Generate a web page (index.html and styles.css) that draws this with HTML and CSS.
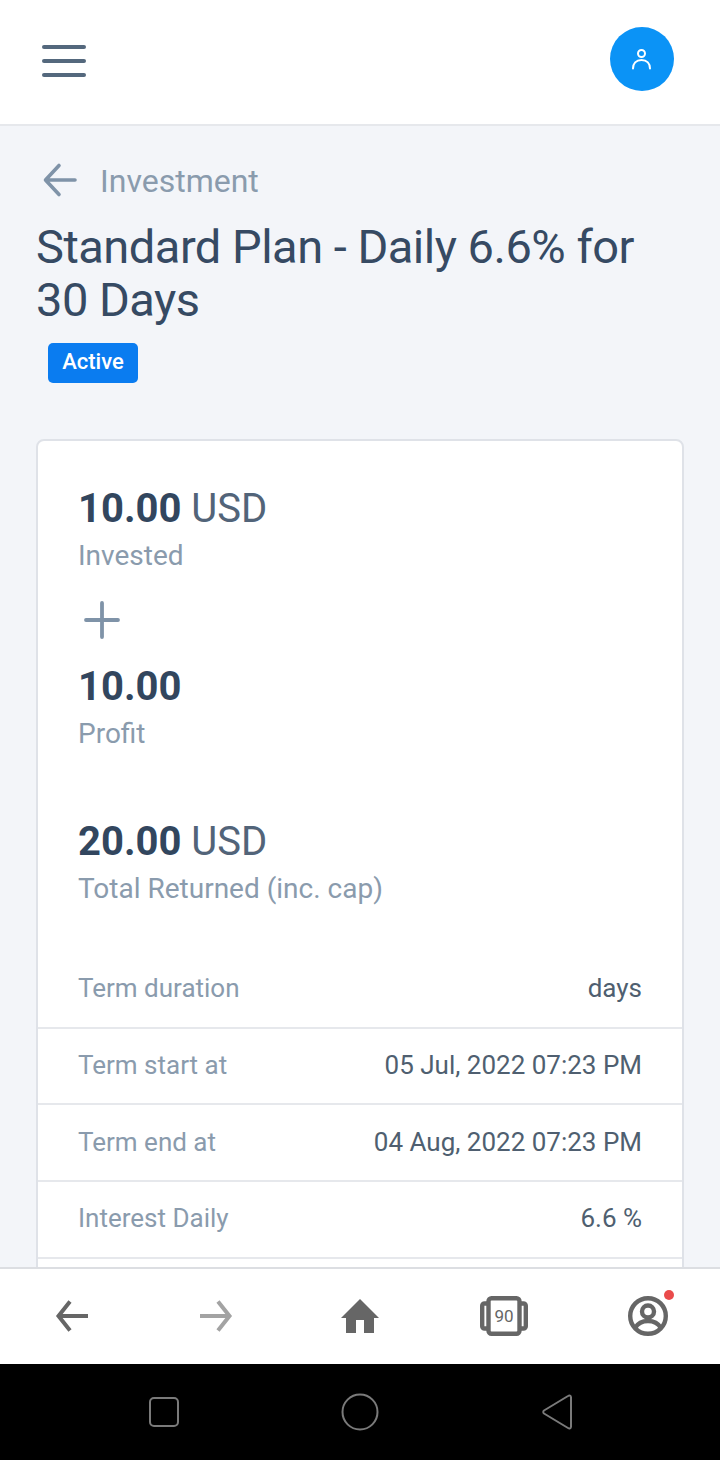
FILE: index.html
```html
<!DOCTYPE html>
<html lang="en">
<head>
  <meta charset="UTF-8" />
  <meta name="viewport" content="width=device-width, initial-scale=1.0"/>
  <title>Investment</title>
  <link rel="stylesheet" href="styles.css">
</head>
<body>
<header class="topbar">
  <div class="burger"><span></span><span></span><span></span></div>
  <div class="avatar">
    <svg width="24" height="24" viewBox="0 0 24 24" fill="none" stroke="#fff" stroke-width="2" stroke-linecap="round">
      <circle cx="11.500" cy="6.500" r="3.500"/>
      <path d="M3 21.500c0-5 3-8.500 8.500-8.500s8.500 3.500 8.500 8.500"/>
    </svg>
  </div>
</header>

<main class="content">
  <div class="crumb">
    <svg width="36" height="36" viewBox="0 0 36 36" fill="none" stroke="#7f93a8" stroke-width="3.600" stroke-linecap="round" stroke-linejoin="round">
      <path d="M33 18H4M17 3.500 3.500 18 17 32.500"/>
    </svg>
    <span>Investment</span>
  </div>
  <h1>Standard Plan - Daily 6.6% for 30 Days</h1>
  <span class="badge">Active</span>

  <section class="card">
    <div class="summary">
      <div class="amount"><b>10.00</b> USD</div>
      <div class="label">Invested</div>
      <svg class="plus" width="38" height="38" viewBox="0 0 38 38" stroke="#7f93a8" stroke-width="3.800" stroke-linecap="round">
        <path d="M19 2v34M3 19h32"/>
      </svg>
      <div class="amount"><b>10.00</b></div>
      <div class="label">Profit</div>
      <div class="amount total"><b>20.00</b> USD</div>
      <div class="label">Total Returned (inc. cap)</div>
    </div>
    <ul class="rows">
      <li><span>Term duration</span><strong>days</strong></li>
      <li><span>Term start at</span><strong>05 Jul, 2022 07:23 PM</strong></li>
      <li><span>Term end at</span><strong>04 Aug, 2022 07:23 PM</strong></li>
      <li><span>Interest Daily</span><strong>6.6 %</strong></li>
      <li><span>&nbsp;</span><strong>&nbsp;</strong></li>
    </ul>
  </section>
</main>

<nav class="browser-nav">
  <a>
    <svg width="36" height="36" viewBox="0 0 36 36" fill="none" stroke="#666" stroke-width="4">
      <path d="M34 18H5M16 3.500 4.500 18 16 32.500"/>
    </svg>
  </a>
  <a>
    <svg width="36" height="36" viewBox="0 0 36 36" fill="none" stroke="#a3a3a3" stroke-width="4">
      <path d="M2 18h29M20 3.500 31.500 18 20 32.500"/>
    </svg>
  </a>
  <a>
    <svg width="40" height="36" viewBox="0 0 40 36" fill="#666">
      <path d="M20 1 39 20h-5v15H24V22h-8v13H6V20H1z"/>
    </svg>
  </a>
  <a class="tabs">
    <svg width="48" height="40" viewBox="0 0 48 40" fill="none" stroke="#666" stroke-width="4.400" stroke-linejoin="round">
      <rect x="8.500" y="2.200" width="31" height="35.600" rx="3"/>
      <path d="M8 7.500H4.500a2.300 2.300 0 0 0-2.300 2.300v20.400a2.300 2.300 0 0 0 2.300 2.300H8M40 7.500h3.500a2.300 2.300 0 0 1 2.300 2.300v20.400a2.300 2.300 0 0 1-2.300 2.300H40"/>
    </svg>
    <span>90</span>
  </a>
  <a class="me">
    <svg width="42" height="40" viewBox="0 0 42 40" fill="none" stroke="#666" stroke-width="4.400">
      <circle cx="21" cy="20" r="17.800"/>
      <circle cx="21" cy="15.500" r="6"/>
      <path d="M8 32c3-5 8-7 13-7s10 2 13 7"/>
    </svg>
    <i class="dot"></i>
  </a>
</nav>

<footer class="android-nav">
  <svg width="32" height="32" viewBox="0 0 32 32" fill="none" stroke="#7a7a7a" stroke-width="2">
    <rect x="2" y="2" width="28" height="28" rx="4"/>
  </svg>
  <svg width="38" height="38" viewBox="0 0 38 38" fill="none" stroke="#7a7a7a" stroke-width="2">
    <circle cx="19" cy="19" r="17.500"/>
  </svg>
  <svg width="34" height="38" viewBox="0 0 34 38" fill="none" stroke="#7a7a7a" stroke-width="2" stroke-linejoin="round">
    <path d="M31 4.500v29c0 2-1.500 2.500-3 1.500L4 20.500c-1-.8-1-2.200 0-3L28 3c1.500-1 3-.5 3 1.500z"/>
  </svg>
</footer>
</body>
</html>
```

FILE: styles.css
```css
* {
  box-sizing: border-box;
}

body {
  font-family: Roboto, sans-serif;
  margin: 0;
  width: 720px;
  height: 1460px;
  overflow: hidden;
  display: flex;
  flex-direction: column;
  background-color: #f3f5f9;
}

.topbar {
  flex: none;
  height: 126px;
  display: flex;
  justify-content: space-between;
  align-items: center;
  padding: 0 46px 7px 42px;
  background-color: #fff;
  border-bottom: 2px solid #e6e8ec;
}

.burger {
  width: 44px;
  margin-top: 5px;
  display: flex;
  flex-direction: column;
  gap: 10px;
}

.burger span {
  height: 4px;
  border-radius: 2px;
  background-color: #54687d;
}

.avatar {
  width: 64px;
  height: 64px;
  border-radius: 50%;
  background-color: #0b93f6;
  display: flex;
  align-items: center;
  justify-content: center;
}

.content {
  flex: 1;
  min-height: 0;
  overflow: hidden;
  padding: 36px 36px 0;
}

.crumb {
  display: flex;
  align-items: center;
  gap: 22px;
  padding-left: 6px;
  height: 36px;
  font-size: 32px;
  color: #8a9bad;
}

.crumb span {
  padding-top: 2px;
}

h1 {
  margin: 22px 0 17px;
  font-size: 47px;
  line-height: 53px;
  font-weight: 400;
  letter-spacing: -0.5px;
  color: #364a63;
}

.badge {
  display: block;
  width: 90px;
  height: 40px;
  margin-left: 12px;
  line-height: 38px;
  text-align: center;
  font-size: 22px;
  font-weight: 500;
  color: #fff;
  background-color: #0a7cf0;
  border-radius: 5px;
}

.card {
  margin-top: 56px;
  width: 648px;
  background-color: #fff;
  border: 2px solid #dfe2e8;
  border-radius: 8px;
}

.summary {
  padding: 45px 40px 0;
}

.amount {
  font-size: 40px;
  line-height: 46px;
  color: #526479;
}

.amount b {
  font-weight: 700;
  color: #32465e;
}

.total {
  margin-top: 61px;
}

.label {
  font-size: 28px;
  line-height: 48px;
  color: #8a9bad;
}

.plus {
  display: block;
  margin: 21px 0 25px 5px;
}

.rows {
  list-style: none;
  margin: 39px 0 0;
  padding: 0;
}

.rows li {
  height: 76.7px;
  padding: 0 40px 2px;
  display: flex;
  justify-content: space-between;
  align-items: center;
  font-size: 26px;
  color: #8a9bad;
  border-bottom: 2px solid #e6e8ec;
}

.rows strong {
  font-weight: 400;
  color: #4f5f70;
}

.browser-nav {
  flex: none;
  height: 97px;
  display: grid;
  grid-template-columns: repeat(5, 144px);
  padding-bottom: 2px;
  background-color: #fff;
  border-top: 2px solid #dcdee2;
}

.browser-nav a {
  position: relative;
  display: flex;
  align-items: center;
  justify-content: center;
}

.tabs span {
  position: absolute;
  inset: 0;
  display: flex;
  align-items: center;
  justify-content: center;
  font-size: 17px;
  color: #666;
}

.dot {
  position: absolute;
  left: 88px;
  top: 21px;
  width: 10px;
  height: 10px;
  border-radius: 50%;
  background-color: #ea4b4b;
}

.android-nav {
  flex: none;
  height: 96px;
  display: grid;
  grid-template-columns: 328px 64px 328px;
  background-color: #000;
  align-items: center;
  justify-items: center;
}

.android-nav svg:first-child {
  justify-self: end;
  margin-right: 148px;
}

.android-nav svg:last-child {
  justify-self: start;
  margin-left: 148px;
}
```
